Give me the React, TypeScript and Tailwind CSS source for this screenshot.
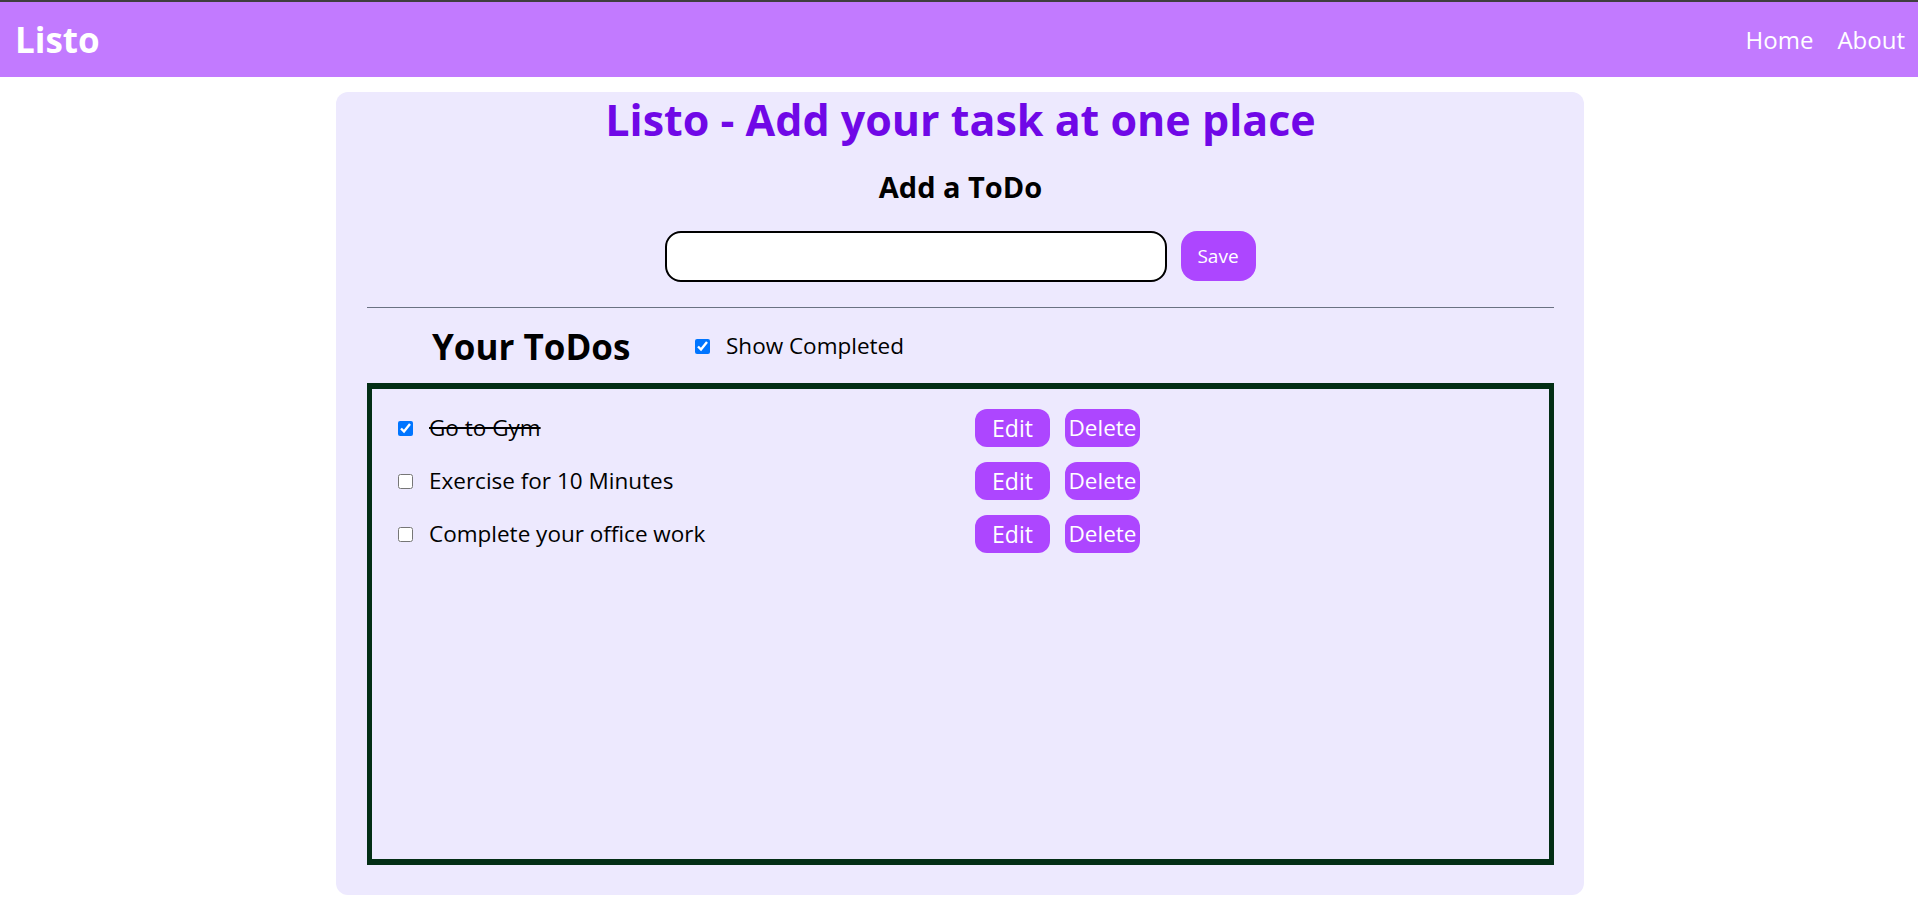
import React, { useState } from "react";

interface Todo {
  id: number;
  todo: string;
  isCompleted: boolean;
}

const initialTodos: Todo[] = [
  { id: 1, todo: "Go to Gym", isCompleted: true },
  { id: 2, todo: "Exercise for 10 Minutes", isCompleted: false },
  { id: 3, todo: "Complete your office work", isCompleted: false }
];

const Navbar = () => {
  return (
    <nav className="flex h-[77px] items-center justify-between border-t-2 border-[#3f3f3f] bg-purple-400 pl-[15px] pr-[13px] text-white">
      <div className="text-[35px] font-bold leading-none">Listo</div>
      <ul className="flex gap-[24px] text-[24px] leading-none">
        <li className="cursor-pointer">Home</li>
        <li className="cursor-pointer">About</li>
      </ul>
    </nav>
  );
};

const App = () => {
  const [todo, setTodo] = useState("");
  const [todos, setTodos] = useState<Todo[]>(initialTodos);
  const [showFinished, setShowFinished] = useState(true);

  const handleAdd = () => {
    if (todo.trim().length === 0) return;
    setTodos([...todos, { id: Date.now(), todo, isCompleted: false }]);
    setTodo("");
  };

  const handleCheck = (id: number) => {
    setTodos(
      todos.map((t) => (t.id === id ? { ...t, isCompleted: !t.isCompleted } : t))
    );
  };

  const handleDelete = (id: number) => {
    setTodos(todos.filter((t) => t.id !== id));
  };

  const handleEdit = (id: number) => {
    const t = todos.find((i) => i.id === id);
    if (!t) return;
    setTodo(t.todo);
    handleDelete(id);
  };

  return (
    <div className="min-h-[910px] bg-white font-['Open_Sans','Noto_Sans',sans-serif] text-black">
      <Navbar />
      <div className="ml-[336px] mt-[15px] flex h-[803px] w-[1248px] flex-col rounded-xl bg-violet-100 pb-[30px] pl-[31px] pr-[30px]">
        <h1 className="flex h-[54px] items-center justify-center text-[43px] font-bold leading-none text-violet-700">
          Listo - Add your task at one place
        </h1>
        <h2 className="mt-[20px] flex h-[40px] items-center justify-center text-[29px] font-bold leading-none">
          Add a ToDo
        </h2>
        <div className="mt-[25px] flex justify-center pr-px">
          <input
            type="text"
            value={todo}
            onChange={(e) => setTodo(e.target.value)}
            className="h-[51px] w-[502px] rounded-[16px] border-2 border-black bg-white px-3 text-lg outline-none"
          />
          <button
            onClick={handleAdd}
            className="ml-[14px] h-[50px] w-[75px] rounded-[16px] bg-purple-500 text-[19px] font-medium leading-none text-white"
          >
            Save
          </button>
        </div>
        <div className="mt-[25px] h-px bg-gray-500"></div>
        <div className="mt-[12px] flex h-[52px] items-center">
          <h2 className="ml-[65px] w-[263px] whitespace-nowrap text-[35px] font-bold leading-none">
            Your ToDos
          </h2>
          <input
            type="checkbox"
            checked={showFinished}
            onChange={() => setShowFinished(!showFinished)}
            className="m-0 h-[15px] w-[15px] accent-[#0075ff]"
          />
          <label className="ml-[16px] text-[22.5px] leading-none">Show Completed</label>
        </div>
        <div className="mt-[11px] h-[482px] border-x-[5px] border-y-[6px] border-green-950 pl-[26px] pt-[20px]">
          <div className="flex flex-col gap-[15px]">
            {todos
              .filter((t) => showFinished || !t.isCompleted)
              .map((item) => (
                <div key={item.id} className="flex h-[38px] items-center">
                  <input
                    type="checkbox"
                    checked={item.isCompleted}
                    onChange={() => handleCheck(item.id)}
                    className="m-0 h-[15px] w-[15px] accent-[#0075ff]"
                  />
                  <div
                    className={`ml-[16px] w-[546px] whitespace-nowrap text-[22.5px] leading-none ${
                      item.isCompleted ? "line-through" : ""
                    }`}
                  >
                    {item.todo}
                  </div>
                  <button
                    onClick={() => handleEdit(item.id)}
                    className="h-[38px] w-[75px] rounded-[12px] bg-purple-500 text-[23px] leading-none text-white"
                  >
                    Edit
                  </button>
                  <button
                    onClick={() => handleDelete(item.id)}
                    className="ml-[15px] h-[38px] w-[75px] whitespace-nowrap rounded-[12px] bg-purple-500 px-0 text-[22.5px] leading-none text-white"
                  >
                    Delete
                  </button>
                </div>
              ))}
          </div>
        </div>
      </div>
    </div>
  );
};

export default App;
